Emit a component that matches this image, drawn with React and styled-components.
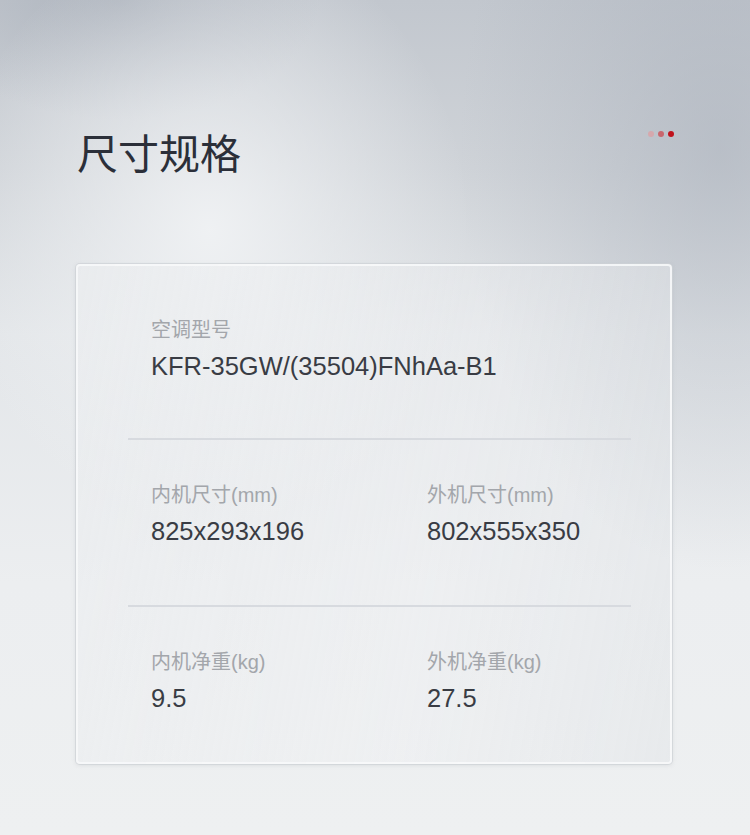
import React from "react";
import styled, { createGlobalStyle } from "styled-components";

const Global = createGlobalStyle`
  html, body { margin: 0; padding: 0; }
  body { width: 750px; height: 835px; overflow: hidden; }
`;

const Page = styled.div`
  position: relative;
  width: 750px;
  height: 835px;
  box-sizing: border-box;
  overflow: hidden;
  font-family: "Liberation Sans", "Noto Sans CJK SC", sans-serif;
  background:
    radial-gradient(ellipse 260px 300px at 210px 230px, rgba(240,242,244,0.95), rgba(240,242,244,0) 100%),
    radial-gradient(ellipse 200px 120px at 120px 0px, rgba(160,167,178,0.6), rgba(160,167,178,0) 100%),
    radial-gradient(ellipse 260px 420px at 720px 150px, rgba(168,175,186,0.55), rgba(168,175,186,0) 100%),
    linear-gradient(180deg, #c2c7ce 0%, #cfd3d8 20%, #e3e6e9 40%, #eceef0 70%, #eef0f1 100%);
  padding-top: 126px;
`;

const Header = styled.div`
  display: flex;
  justify-content: space-between;
  align-items: flex-start;
  padding: 0 76px 0 77px;
`;

const Title = styled.h1`
  margin: 0;
  font-family: "Noto Sans CJK SC", sans-serif;
  font-weight: 400;
  font-size: 41px;
  line-height: 50px;
  color: #2b2f39;
`;

const Dots = styled.div`
  display: flex;
  gap: 4px;
  margin-top: 5px;
`;

const Dot = styled.span`
  width: 6px;
  height: 6px;
  border-radius: 50%;
  background: ${(p) => p.$c};
`;

const Card = styled.div`
  margin: 88px 0 0 76px;
  width: 596px;
  height: 500px;
  box-sizing: border-box;
  border: 2px solid rgba(248, 249, 250, 0.85);
  border-radius: 4px;
  box-shadow: 0 0 0 1px rgba(205, 209, 214, 0.7), 0 1px 4px rgba(150, 156, 164, 0.25);
  background: linear-gradient(100deg, rgba(236,238,240,0.6) 0%, rgba(240,241,243,0.4) 60%, rgba(226,229,232,0.5) 100%);
  display: flex;
  flex-direction: column;
`;

const Section = styled.div`
  height: ${(p) => p.$h}px;
  box-sizing: border-box;
  padding: ${(p) => p.$top}px 0 0 73px;
  display: grid;
  grid-template-columns: 276px 1fr;
  align-content: start;
`;

const Divider = styled.div`
  height: 2px;
  margin: 0 39px 0 50px;
  background: #d7dadf;
  flex: none;
`;

const Item = styled.div`
  display: flex;
  flex-direction: column;
  gap: 8px;
  grid-column: ${(p) => (p.$wide ? "1 / -1" : "auto")};
  white-space: nowrap;
`;

const Label = styled.div`
  font-family: "Liberation Sans", "Noto Sans CJK SC", sans-serif;
  font-size: 20px;
  line-height: 26px;
  color: #a3a6ab;
`;

const Value = styled.div`
  font-family: "Liberation Sans", "Noto Sans CJK SC", sans-serif;
  font-size: 25.5px;
  line-height: 30px;
  color: #393c44;
`;

function Field({ label, value, wide }) {
  return (
    <Item $wide={wide}>
      <Label>{label}</Label>
      <Value>{value}</Value>
    </Item>
  );
}

export default function App() {
  return (
    <Page>
      <Global />
      <Header>
        <Title>尺寸规格</Title>
        <Dots>
          <Dot $c="#d6a8ad" />
          <Dot $c="#c9666d" />
          <Dot $c="#c0121c" />
        </Dots>
      </Header>
      <Card>
        <Section $h={172} $top={51}>
          <Field wide label="空调型号" value="KFR-35GW/(35504)FNhAa-B1" />
        </Section>
        <Divider />
        <Section $h={165} $top={42}>
          <Field label="内机尺寸(mm)" value="825x293x196" />
          <Field label="外机尺寸(mm)" value="802x555x350" />
        </Section>
        <Divider />
        <Section $h={155} $top={42}>
          <Field label="内机净重(kg)" value="9.5" />
          <Field label="外机净重(kg)" value="27.5" />
        </Section>
      </Card>
    </Page>
  );
}
